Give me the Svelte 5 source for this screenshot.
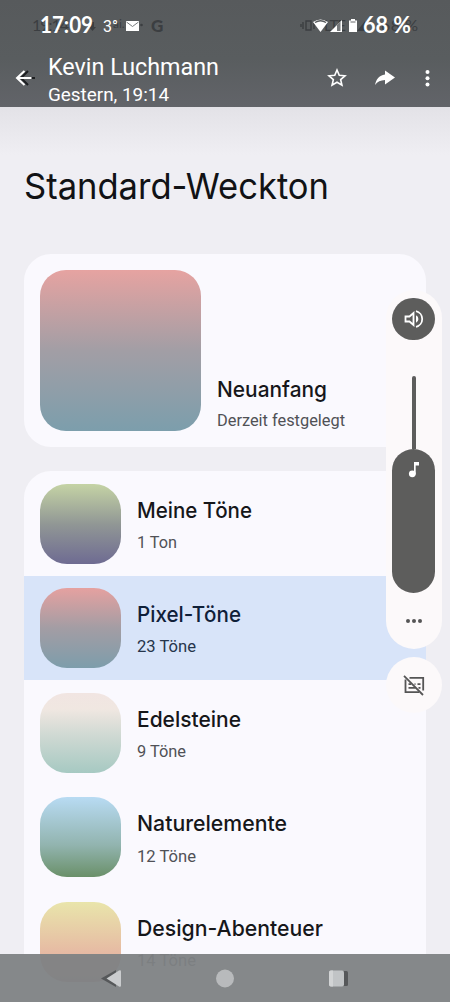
<script>
  const tones = [
    { name: 'Meine Töne', count: '1 Ton', kind: 'mine', w: 115, cw: 40 },
    { name: 'Pixel-Töne', count: '23 Töne', kind: 'pixel', w: 104, cw: 59, selected: true },
    { name: 'Edelsteine', count: '9 Töne', kind: 'gems', w: 104, cw: 49 },
    { name: 'Naturelemente', count: '12 Töne', kind: 'nature', w: 150, cw: 59 },
    { name: 'Design-Abenteuer', count: '14 Töne', kind: 'design', w: 186, cw: 59 }
  ];
</script>

{#snippet label(text, width, size, kind)}
  <svg class="label {kind}" height={size * 1.4} width={width + 4} aria-label={text}>
    <text x="0" y={size * 1.05} font-size={size} textLength={width} lengthAdjust="spacingAndGlyphs">{text}</text>
  </svg>
{/snippet}

<div class="screen">
  <header>
    <div class="status">
      <svg width="450" height="50" viewBox="0 0 450 50">
        <g class="ghost">
          <text x="32" y="31" font-size="16" textLength="37">19:14</text>
          <path d="M91 22v5h-2l3.500 4 3.500-4h-2v-5z" />
          <text x="113" y="28" font-size="12">ai.</text>
          <circle cx="141.500" cy="25" r="1.300" />
          <text class="google" x="151" y="31.500" font-size="17">G</text>
          <path d="M306 21v9h5v-9zM303 22v7M301 24v3M314 22v7" fill="none" stroke="#3b3e41" stroke-width="1.400" />
          <text x="324" y="31" font-size="15" textLength="22">LTE</text>
          <path d="M357 31l8-10v10z" />
          <text x="381" y="31" font-size="16" textLength="37">68 %</text>
        </g>
        <g class="live">
          <text class="strong" x="40" y="33" font-size="22" textLength="53" lengthAdjust="spacingAndGlyphs">17:09</text>
          <text class="rob" x="103" y="31.500" font-size="17" textLength="15" lengthAdjust="spacingAndGlyphs">3°</text>
          <path d="M126 21h13v10h-13z" />
          <path d="M126.500 22l6 4.500 6-4.500" fill="none" stroke="#777b7e" />
          <path d="M313 22q7.500-5 15 0l-7.500 10z" />
          <path d="M315 22.500q5.500-3.500 11 0" fill="none" stroke="#55595b" stroke-width="1.300" />
          <path d="M330 32l12-12v12z" />
          <path d="M337 31v-6l3.500-3.500V31z" fill="#777a7c" />
          <path d="M351 19h4v1.500h2V32h-8V20.500h2z" />
          <path d="M350.500 22h5" stroke="#686b6d" />
          <text class="strong" x="363" y="33" font-size="22" textLength="48" lengthAdjust="spacingAndGlyphs">68 %</text>
        </g>
      </svg>
    </div>
    <div class="bar">
      <svg class="back" width="22" height="20" viewBox="0 0 22 20" fill="none" stroke-width="2">
        <path d="M13 3L6 10l7 7M6 10h14" stroke="#1d1f21" />
        <path d="M9.500 3L2 10l7.500 7M2 10h14.500" stroke="#fff" />
      </svg>
      <div class="who">
        {@render label('Kevin Luchmann', 171, 24, 'sender')}
        {@render label('Gestern, 19:14', 121, 18, 'sent')}
      </div>
      <svg class="actions" width="120" height="24" viewBox="0 0 120 24">
        <path d="M12 4l2.250 5.300 5.750.500-4.350 3.800 1.300 5.600L12 16.200l-4.950 3 1.300-5.600L4 9.800l5.750-.500z" fill="none" stroke="#fff" stroke-width="1.600" />
        <path d="M60 4.500l10 7-10 7v-4.400c-4.500.200-7.500 1.700-10 5 1-5.500 4-10 10-10.700z" fill="#fff" />
        <g fill="#fff"><circle cx="102.500" cy="6" r="2" /><circle cx="102.500" cy="12.300" r="2" /><circle cx="102.500" cy="18.500" r="2" /></g>
      </svg>
    </div>
  </header>

  <main>
    <h1>{@render label('Standard-Weckton', 305, 36, 'title')}</h1>
    <section class="current">
      <div class="cover"></div>
      <div class="info">
        {@render label('Neuanfang', 110, 22, 'name')}
        {@render label('Derzeit festgelegt', 128, 16, 'count')}
      </div>
    </section>
    <section class="list">
      {#each tones as tone}
        <div class="row" class:selected={tone.selected}>
          <div class="swatch {tone.kind}"></div>
          <div class="copy">
            {@render label(tone.name, tone.w, 22, 'name')}
            {@render label(tone.count, tone.cw, 16, 'count')}
          </div>
        </div>
      {/each}
    </section>
  </main>

  <aside class="volume">
    <div class="mode">
      <svg width="24" height="24" viewBox="0 0 24 24" fill="none" stroke="#fff" stroke-width="1.800">
        <path d="M3.500 9.500h4L11.500 6v12l-4-3.500h-4z" />
        <path d="M14 4.200a8 8 0 0 1 0 15.600" />
        <path d="M14 8.200a4.200 4.200 0 0 1 0 7.600z" fill="#fff" stroke="none" />
      </svg>
    </div>
    <div class="track"></div>
    <div class="level">
      <svg width="14" height="20" viewBox="0 0 14 20"><circle cx="5.300" cy="13.800" r="3.400" fill="#fff" /><path d="M7 2h5v3.500H8.700v9H7z" fill="#fff" /></svg>
    </div>
    <div class="more"><i></i><i></i><i></i></div>
  </aside>
  <div class="captions">
    <svg width="24" height="24" viewBox="0 0 24 24" fill="none" stroke="#555" stroke-width="1.800">
      <path d="M7.500 4.800h13.700v12.700M3.500 6.500v12.700h13.500" />
      <path d="M12.500 11.200h1M15.500 11.200H18.500M6.500 11.200h2.500M6.500 14.800h7M16.500 14.800h2" />
      <path d="M2 2.800L21 22" />
    </svg>
  </div>

  <nav>
    <svg width="450" height="49" viewBox="0 0 450 49">
      <path d="M101 24.500L116 16v17z" fill="#56585a" />
      <path d="M106.500 24.500L119 16.500q2-.800 2 1v14q0 1.800-2 1z" fill="#caccce" />
      <circle cx="225" cy="24.500" r="9" fill="#b8babc" />
      <rect x="332" y="17" width="16" height="15" rx="1.500" fill="#56585a" />
      <rect x="329" y="16.500" width="15" height="16" rx="2" fill="#c1c4c6" />
      <path d="M331 16.500h2v16h-2q-2 0-2-2v-12q0-2 2-2" fill="#d2d4d5" />
    </svg>
  </nav>
</div>

<style>
  :global(body) { margin: 0; }
  .screen { position: relative; width: 450px; height: 1002px; overflow: hidden; background: #efeef3; font-family: Roboto, sans-serif; }
  svg { display: block; flex: none; }
  header { height: 107px; background: linear-gradient(#575a5c, #595d5f 55%, #626469); }
  .status { height: 50px; }
  .status text { font-family: Lato, sans-serif; }
  .status .rob { font-family: Roboto, sans-serif; }
  .status .strong { font-weight: 700; }
  .status .google { font-weight: 900; }
  .ghost { fill: #3b3e41; }
  .live { fill: #fff; }
  .bar { display: flex; height: 57px; }
  .back { margin: 18px 11px 0 15px; }
  .who { width: 277px; padding-top: 0; }
  .actions { margin-top: 16px; }
  .label { overflow: visible; font-family: Roboto, sans-serif; }
  .sender, .sent { fill: #fff; }
  .sent { margin-top: -1.500px; }
  .title { fill: #111215; font-family: Inter, sans-serif; font-weight: 400; }
  .name { fill: #16171a; font-family: Inter, sans-serif; font-weight: 500; }
  .count { fill: #505156; }
  main { padding: 0 24px; background: linear-gradient(#e3e2e7, #efeef3 48px); }
  h1 { height: 93px; margin: 0; padding-top: 54px; }
  .current { display: flex; height: 161px; padding: 16px; gap: 16px; border-radius: 27px; background: #faf9fe; }
  .cover { width: 161px; height: 161px; border-radius: 26px; background: linear-gradient(#e6a3a1, #a29ea5 50%, #7c9eac); }
  .info { padding-top: 104px; }
  .info .count { margin-top: 4.500px; }
  .list { margin-top: 24px; overflow: hidden; border-radius: 27px 27px 0 0; background: #faf9fe; }
  .row { display: flex; box-sizing: border-box; height: 104.600px; padding: 12.500px 16px; gap: 16px; }
  .selected { background: #d8e4f9; }
  .selected .name { fill: #102039; }
  .selected .count { fill: #26354b; }
  .swatch { width: 80.500px; height: 80px; border-radius: 27px; }
  .copy { padding-top: 11px; }
  .copy .count { margin-top: 5.500px; }
  .mine { background: linear-gradient(#c5d3a5, #919795 50%, #6e6b92); }
  .pixel { background: linear-gradient(#e5a1a0, #a39da4 50%, #7d9dab); }
  .gems { background: linear-gradient(#f1e5e2, #f0e7e1 20%, #d2dad4 50%, #a6c9c2); }
  .nature { background: linear-gradient(#b8dbf3, #92b4af 60%, #6a9069); }
  .design { background: linear-gradient(#e9e5ab, #e6b9a3 65%, #d9a29e); }
  .volume { position: absolute; left: 385.500px; top: 290px; width: 56px; height: 359px; border-radius: 28px; background: #fcf9fa; display: flex; flex-direction: column; align-items: center; }
  .mode { margin-top: 7.500px; width: 42.500px; height: 42.500px; border-radius: 50%; background: #5d5d5c; display: grid; place-items: center; }
  .track { margin-top: 36px; width: 4px; height: 73px; border-radius: 2px 2px 0 0; background: #5d5d5c; }
  .level { width: 42.500px; height: 143.500px; box-sizing: border-box; padding-top: 11px; border-radius: 22px; background: #5d5d5c; display: flex; justify-content: center; }
  .more { margin-top: 26px; display: flex; gap: 2px; }
  .more i { width: 4px; height: 4px; border-radius: 50%; background: #555; }
  .captions { position: absolute; left: 385.500px; top: 657px; width: 56px; height: 56px; border-radius: 50%; background: #fcf9fa; display: grid; place-items: center; }
  nav { position: absolute; left: 0; bottom: 0; width: 450px; height: 48.500px; background: rgba(126, 130, 132, .95); }
</style>
